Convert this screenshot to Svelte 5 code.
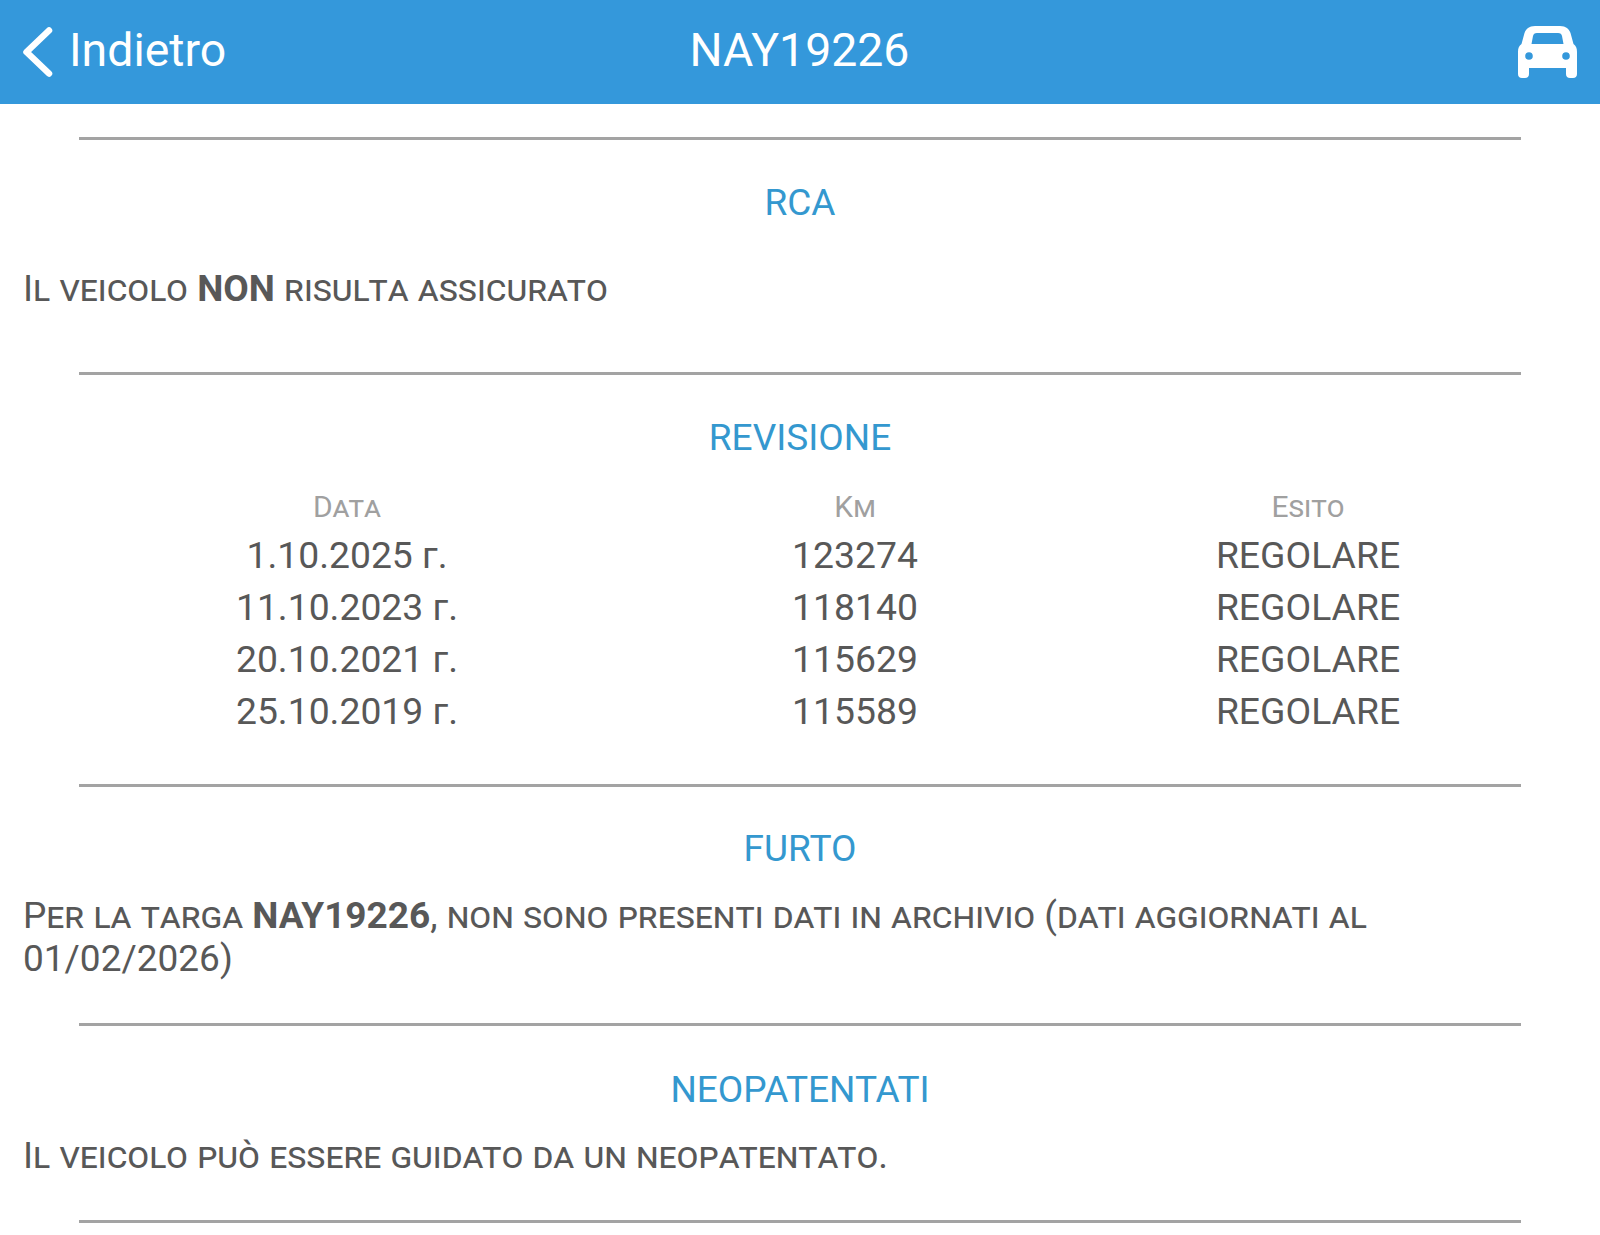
<script lang="ts">
	const revisions = [
		{ date: '1.10.2025 г.', km: '123274', result: 'REGOLARE' },
		{ date: '11.10.2023 г.', km: '118140', result: 'REGOLARE' },
		{ date: '20.10.2021 г.', km: '115629', result: 'REGOLARE' },
		{ date: '25.10.2019 г.', km: '115589', result: 'REGOLARE' }
	];
</script>

<div class="page">
	<header class="topbar">
		<div class="back">
			<svg class="chevron" viewBox="0 0 34 54" width="34" height="54" aria-hidden="true">
				<path d="M27 5.5 L4.5 27 L27 48.5" fill="none" stroke="currentColor" stroke-width="6.5" stroke-linecap="round" stroke-linejoin="round" />
			</svg>
			<span>Indietro</span>
		</div>
		<div class="title">NAY19226</div>
		<svg class="car" viewBox="0 0 59 52" width="59" height="52" aria-hidden="true">
			<path
				fill="currentColor"
				fill-rule="evenodd"
				d="M17 0 H42 C48 0 51 3 52.5 7 L55.5 18 C58 20 59 22 59 26 V48 C59 50.5 57.5 52 55 52 H52 C49.5 52 48 50.5 48 48 V42 H11 V48 C11 50.5 9.5 52 7 52 H4 C1.5 52 0 50.5 0 48 V26 C0 22 1 20 3.5 18 L6.5 7 C8 3 11 0 17 0 Z M19 7 C16.5 7 15.5 8 15 10 L13.5 18 H45.5 L44 10 C43.5 8 42.5 7 40 7 Z M11 26.2 A3.8 3.8 0 1 0 11 33.8 A3.8 3.8 0 1 0 11 26.2 Z M48 26.2 A3.8 3.8 0 1 0 48 33.8 A3.8 3.8 0 1 0 48 26.2 Z"
			/>
		</svg>
	</header>

	<hr class="first" />

	<section class="rca">
		<h2>RCA</h2>
		<p class="note">Il veicolo <b>NON</b> risulta assicurato</p>
	</section>

	<hr />

	<section class="revisione">
		<h2>REVISIONE</h2>
		<div class="table">
			<div class="th">Data</div>
			<div class="th">Km</div>
			<div class="th">Esito</div>
			{#each revisions as row}
				<div class="td">{row.date}</div>
				<div class="td">{row.km}</div>
				<div class="td">{row.result}</div>
			{/each}
		</div>
	</section>

	<hr />

	<section class="furto">
		<h2>FURTO</h2>
		<p class="note">
			Per la targa <b>NAY19226</b>, non sono presenti dati in archivio (dati aggiornati al 01/02/2026)
		</p>
	</section>

	<hr />

	<section class="neo">
		<h2>NEOPATENTATI</h2>
		<p class="note">Il veicolo può essere guidato da un neopatentato.</p>
	</section>

	<hr />
</div>

<style>
	:global(body) {
		margin: 0;
		background: #fff;
	}

	.page {
		font-family: Roboto, 'Liberation Sans', sans-serif;
		color: #585858;
		height: 1235px;
		overflow: hidden;
	}

	.topbar {
		height: 104px;
		background: #3498db;
		color: #fff;
		display: flex;
		align-items: center;
		justify-content: space-between;
		padding: 0 23px 0 22px;
		position: relative;
		font-size: 46.4px;
	}

	.back {
		display: flex;
		align-items: center;
		gap: 13px;
	}

	.back span,
	.title {
		padding-bottom: 4px;
	}

	.chevron {
		display: block;
	}

	.title {
		position: absolute;
		left: -1px;
		right: 0;
		text-align: center;
	}

	.car {
		display: block;
	}

	hr {
		border: 0;
		height: 3px;
		background: #a3a3a3;
		margin: 0 79px;
	}

	hr.first {
		margin-top: 33px;
	}

	section {
		padding: 0 23px;
	}

	h2 {
		margin: 0;
		font-size: 37px;
		font-weight: 400;
		line-height: 42px;
		color: #3498cf;
		text-align: center;
	}

	.note {
		margin: 0;
		font-size: 37px;
		line-height: 42px;
		font-variant: small-caps;
		color: #585858;
	}

	.note b {
		font-weight: 700;
	}

	.rca {
		padding-top: 42px;
		padding-bottom: 62px;
	}

	.rca .note {
		margin-top: 44px;
	}

	.revisione {
		padding: 42px 79px 46px;
	}

	.table {
		display: grid;
		grid-template-columns: 536px 480px 1fr;
		grid-template-rows: 45.5px repeat(4, 52.3px);
		text-align: center;
		margin-top: 24px;
	}

	.th {
		font-size: 30px;
		font-variant: small-caps;
		color: #a0a0a0;
		line-height: 48px;
	}

	.td {
		font-size: 37.3px;
		line-height: 52px;
	}

	.furto {
		padding-top: 41px;
		padding-bottom: 43px;
	}

	.furto .note {
		margin-top: 24px;
		max-width: 1400px;
		line-height: 43px;
	}

	.neo {
		padding-top: 43px;
		padding-bottom: 43px;
	}

	.neo .note {
		margin-top: 24px;
	}
</style>
